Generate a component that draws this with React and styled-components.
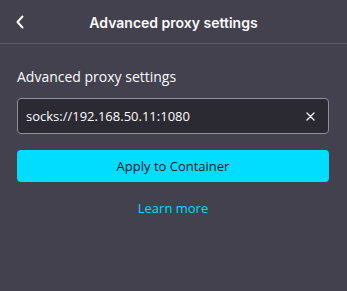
import styled, { createGlobalStyle } from "styled-components";

const GlobalStyle = createGlobalStyle`
    html, body {
        margin: 0;
        padding: 0;
        background: #42414d;
    }
    body {
        font-family: "Open Sans", "Noto Sans", sans-serif;
        color: #fbfbfe;
    }
`;

const Panel = styled.div`
    width: 347px;
    height: 291px;
    background: #42414d;
    display: flex;
    flex-direction: column;
`;

const Header = styled.header`
    height: 44px;
    box-sizing: border-box;
    border-bottom: 1px solid #5b5a66;
    display: grid;
    grid-template-columns: 40px 1fr 40px;
    align-items: center;
`;

const BackButton = styled.button`
    background: none;
    border: 0;
    padding: 0 0 0 16px;
    height: 44px;
    display: flex;
    align-items: center;
    color: #fbfbfe;
    cursor: pointer;
`;

const Title = styled.h1`
    margin: 0;
    text-align: center;
    font-family: Inter, "Open Sans", sans-serif;
    font-size: 14px;
    font-weight: 600;
`;

const Body = styled.div`
    padding: 23px 18px 0 17px;
    display: flex;
    flex-direction: column;
`;

const Label = styled.label`
    font-size: 14px;
    line-height: 20px;
    color: #fbfbfe;
    margin-bottom: 11px;
`;

const Field = styled.div`
    height: 36px;
    box-sizing: border-box;
    border: 1px solid #8f8f9d;
    border-radius: 4px;
    background: #2b2a33;
    display: flex;
    align-items: center;
    padding: 0 13px 0 8px;
`;

const Input = styled.input`
    flex: 1;
    min-width: 0;
    background: transparent;
    border: 0;
    outline: none;
    color: #fbfbfe;
    font-family: inherit;
    font-size: 13px;
    padding: 0;
`;

const Clear = styled.button`
    background: none;
    border: 0;
    padding: 0;
    width: 10px;
    height: 10px;
    display: flex;
    align-items: center;
    justify-content: center;
    color: #fbfbfe;
`;

const Apply = styled.button`
    margin-top: 16px;
    height: 32px;
    border: 0;
    border-radius: 4px;
    background: #00ddff;
    color: #15141a;
    font-family: inherit;
    font-size: 13px;
    cursor: pointer;
`;

const LearnMore = styled.a`
    margin-top: 17px;
    align-self: center;
    color: #00ddff;
    font-size: 13px;
    text-decoration: none;
`;

export default function App() {
    return (
        <>
            <GlobalStyle />
            <Panel>
                <Header>
                    <BackButton aria-label="Back">
                        <svg width="8" height="14" viewBox="0 0 8 14">
                            <path
                                d="M6.5 1.5 1.5 7l5 5.5"
                                fill="none"
                                stroke="currentColor"
                                strokeWidth="2"
                                strokeLinecap="round"
                                strokeLinejoin="round"
                            />
                        </svg>
                    </BackButton>
                    <Title>Advanced proxy settings</Title>
                    <span />
                </Header>
                <Body>
                    <Label>Advanced proxy settings</Label>
                    <Field>
                        <Input defaultValue="socks://192.168.50.11:1080" />
                        <Clear aria-label="Clear">
                            <svg width="9" height="9" viewBox="0 0 9 9">
                                <path
                                    d="M1 1l7 7M8 1 1 8"
                                    stroke="currentColor"
                                    strokeWidth="1.3"
                                    strokeLinecap="round"
                                />
                            </svg>
                        </Clear>
                    </Field>
                    <Apply>Apply to Container</Apply>
                    <LearnMore href="#">Learn more</LearnMore>
                </Body>
            </Panel>
        </>
    );
}
